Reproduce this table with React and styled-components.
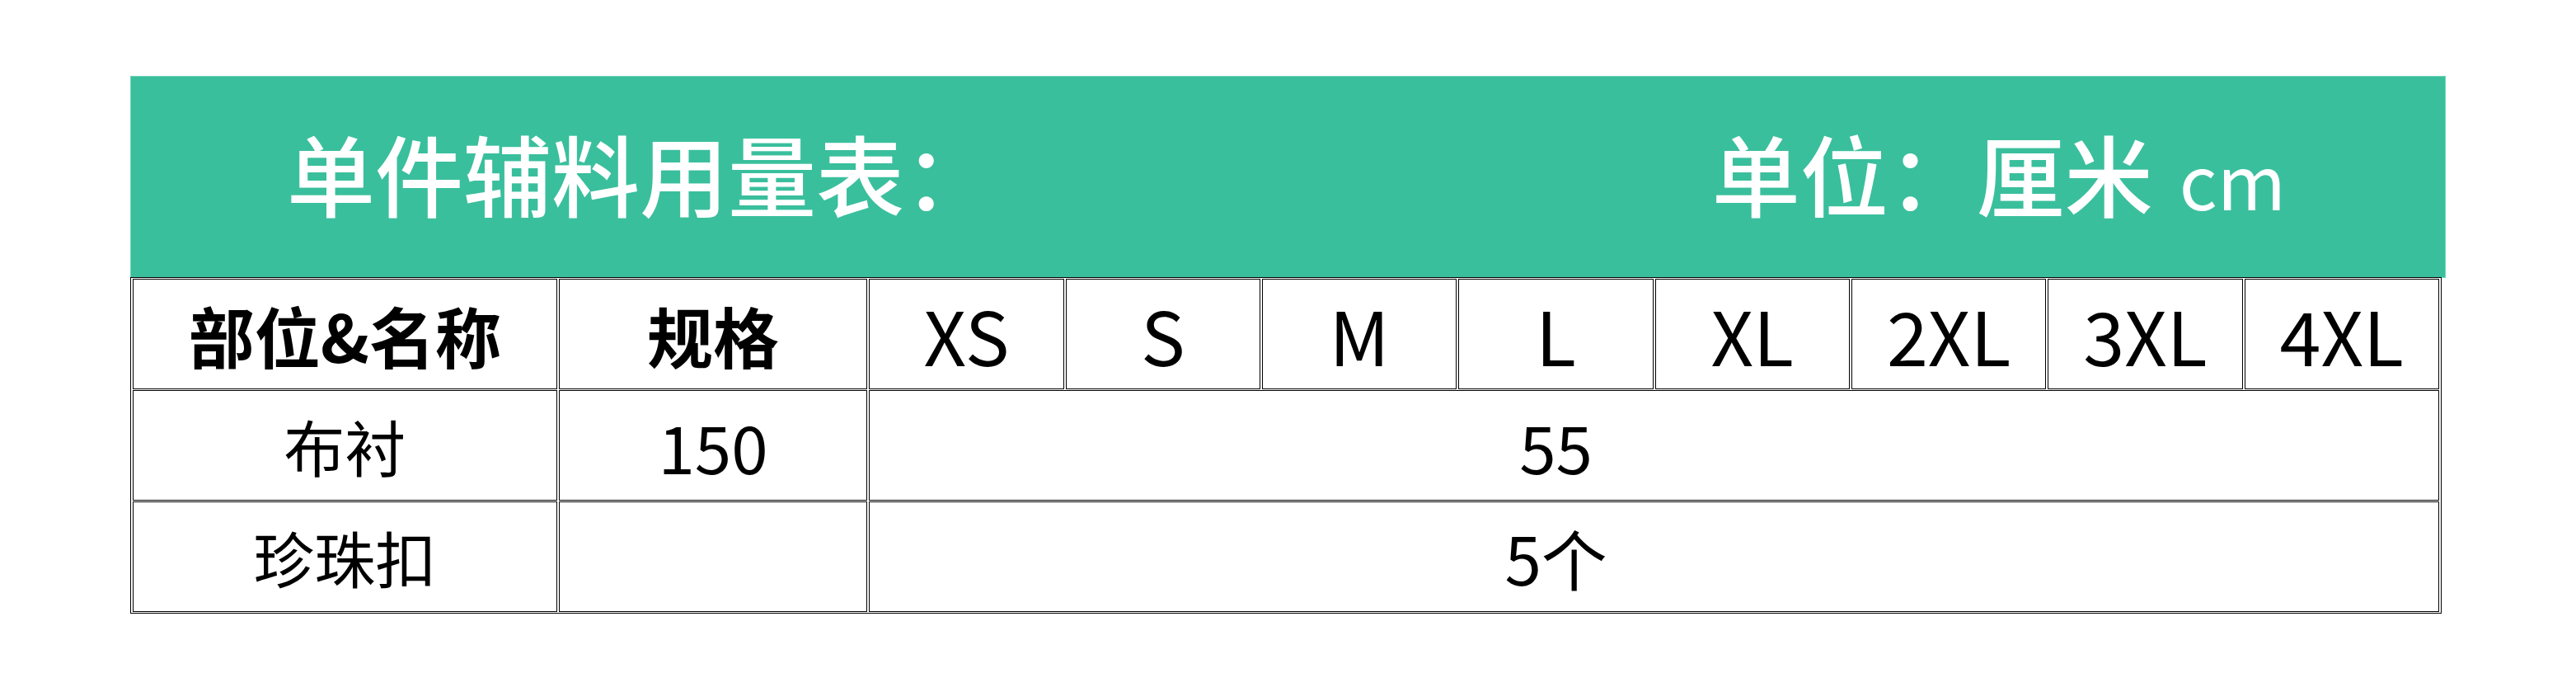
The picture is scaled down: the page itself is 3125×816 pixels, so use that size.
import React from "react";
import styled, { createGlobalStyle } from "styled-components";

const GlobalStyle = createGlobalStyle`
  html, body {
    margin: 0;
    padding: 0;
    background: #ffffff;
  }
  body {
    font-family: "Noto Sans CJK SC", "Noto Sans", sans-serif;
  }
`;

const Page = styled.div`
  padding: 92px 0 0 158px;
  width: 3125px;
  height: 816px;
  box-sizing: border-box;
`;

const Sheet = styled.div`
  width: 2809px;
  display: flex;
  flex-direction: column;
`;

const Banner = styled.div`
  height: 245px;
  background: #3abf9d;
  box-shadow: inset 0 0 0 1px #6fd3b8;
  display: flex;
  align-items: center;
  justify-content: space-between;
  padding: 0 194px 12px 190px;
  box-sizing: border-box;
  color: #ffffff;
  font-family: "Noto Sans CJK SC", sans-serif;
  font-size: 107px;
  font-weight: 500;
  line-height: 1;
  white-space: nowrap;
`;

const BannerText = styled.span`
  display: flex;
  align-items: baseline;
`;

const Unit = styled.span`
  font-size: 90px;
  font-weight: 400;
  margin-left: 32px;
`;

const Table = styled.table`
  width: 2804px;
  table-layout: fixed;
  border: 1px solid #000;
  border-collapse: separate;
  border-spacing: 2px 1px;
  margin-top: -1px;
  font-family: "Noto Sans CJK SC", sans-serif;
  color: #000;
`;

const Cell = styled.td`
  border: 1px solid #000;
  height: 132px;
  padding: 0 ${(p) => p.$padRight || 0}px 0 0;
  text-align: center;
  vertical-align: middle;
  font-size: ${(p) => p.$size || 76}px;
  font-weight: ${(p) => (p.$bold ? 700 : 400)};
  line-height: 1;
  white-space: nowrap;
`;

const sizes = ["XS", "S", "M", "L", "XL", "2XL", "3XL", "4XL"];

export default function App() {
  return (
    <>
      <GlobalStyle />
      <Page>
        <Sheet>
          <Banner>
            <BannerText>单件辅料用量表：</BannerText>
            <BannerText>
              单位：厘米
              <Unit>cm</Unit>
            </BannerText>
          </Banner>
          <Table>
            <colgroup>
              <col style={{ width: 514 }} />
              <col style={{ width: 374 }} />
              {sizes.map((s) => (
                <col key={s} style={{ width: 236 }} />
              ))}
            </colgroup>
            <tbody>
              <tr>
                <Cell $bold $size={80}>部位&amp;名称</Cell>
                <Cell $bold $size={80}>规格</Cell>
                {sizes.map((s) => (
                  <Cell key={s} $size={90}>
                    {s}
                  </Cell>
                ))}
              </tr>
              <tr>
                <Cell $size={74}>布衬</Cell>
                <Cell $size={80}>150</Cell>
                <Cell $size={80} $padRight={238} colSpan={8}>
                  55
                </Cell>
              </tr>
              <tr>
                <Cell $size={74}>珍珠扣</Cell>
                <Cell $size={80}></Cell>
                <Cell $size={80} $padRight={238} colSpan={8}>
                  5个
                </Cell>
              </tr>
            </tbody>
          </Table>
        </Sheet>
      </Page>
    </>
  );
}
